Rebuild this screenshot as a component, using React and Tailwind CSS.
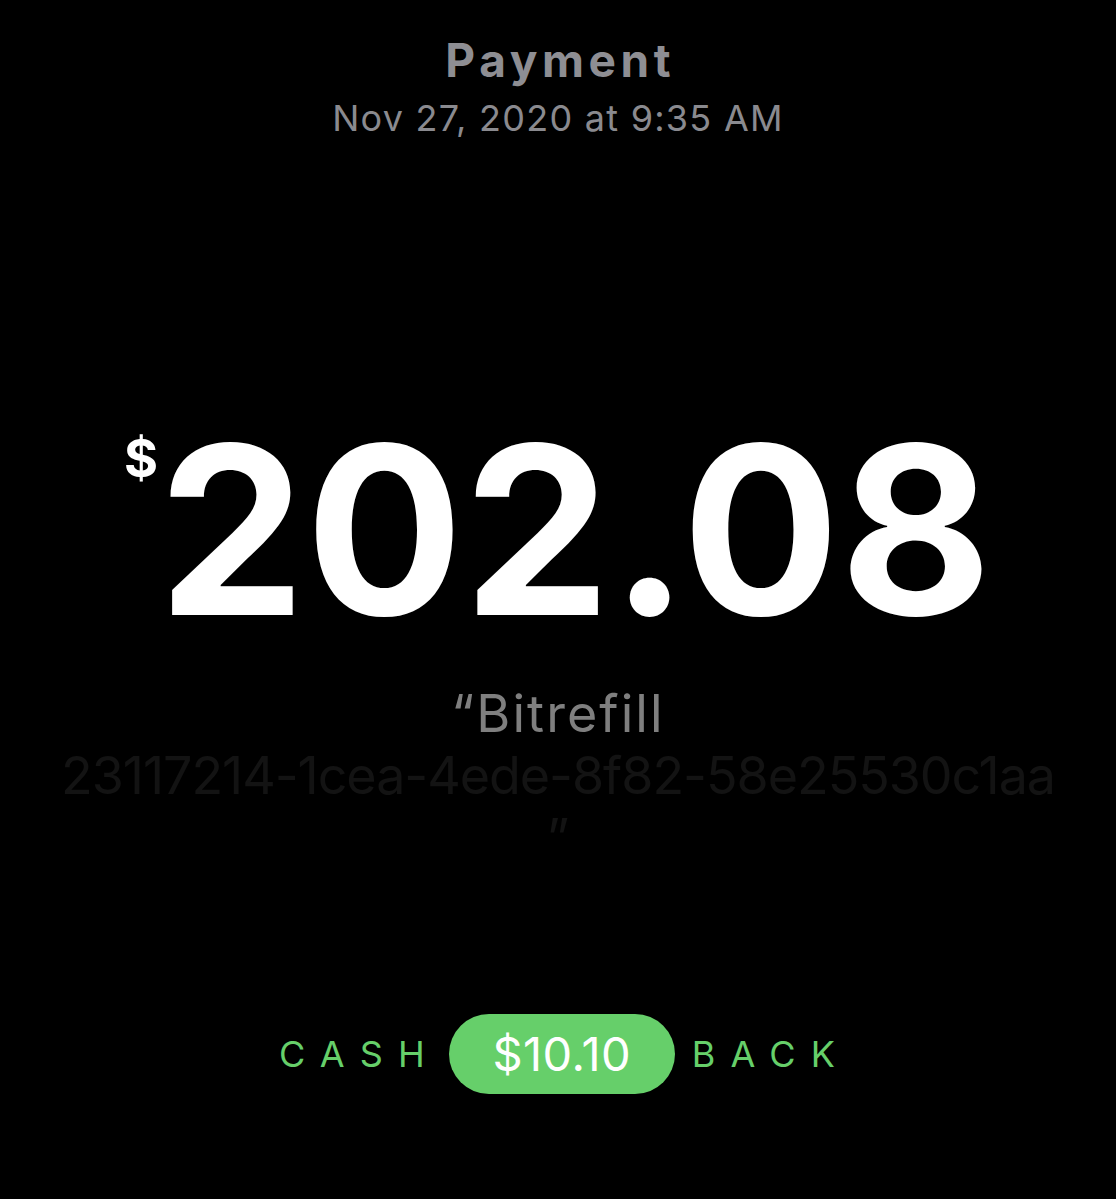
export default function App() {
  const font = { fontFamily: 'Inter, "Noto Sans", sans-serif' };

  return (
    <div style={font} className="min-h-[1199px] w-full bg-black flex flex-col items-center overflow-hidden">
      {/* Header */}
      <div className="pt-[34px] text-[46px] leading-[52px] font-bold text-[#8e8e93] tracking-[0.1em] mr-[-0.1em]">
        Payment
      </div>
      <div className="mt-[10px] text-[36px] leading-[44px] text-[#8a8a8f] tracking-[0.035em]">
        Nov 27, 2020 at 9:35 AM
      </div>

      {/* Amount */}
      <div className="mt-[270px] flex items-start text-white font-bold">
        <span className="text-[52px] leading-[50px] mt-[24px]">$</span>
        <span className="text-[234px] leading-[240px]">202.08</span>
      </div>

      {/* Memo */}
      <div className="mt-[33px] flex flex-col items-center text-[52px] leading-[62px]">
        <span className="text-[#7f7f7f] tracking-[0.04em]">“Bitrefill</span>
        <span className="text-[#131313] whitespace-nowrap tracking-[-0.02em]">23117214-1cea-4ede-8f82-58e25530c1aa</span>
        <span className="text-[#131313]">”</span>
      </div>

      {/* Cash back */}
      <div className="mt-[145px] flex items-center text-[#66cf6a] text-[36px] ml-[-2px]">
        <span className="tracking-[0.42em] mr-[9px]">CASH</span>
        <span className="h-[80px] w-[226px] rounded-full bg-[#66cf6a] text-white text-[47px] tracking-[0.01em] flex items-center justify-center">
          $10.10
        </span>
        <span className="tracking-[0.42em] ml-[17px] mr-[-15px]">BACK</span>
      </div>
    </div>
  );
}
